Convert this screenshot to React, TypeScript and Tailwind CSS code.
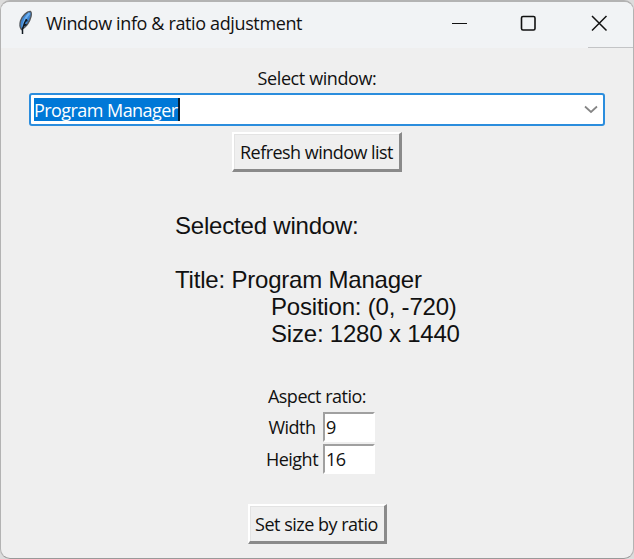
import type { ReactNode } from "react";

const ui = "font-['Open_Sans','Noto_Sans',sans-serif]";

function Feather() {
  return (
    <svg width="16" height="26" viewBox="0 0 16 26" className="ml-[16px] shrink-0">
      <path d="M13.500 1.500C10 1 5 6 3.500 11c-1 3.500-1 6 1 8.500 5-3 8-7 9.500-13 .5-2.500.3-4.500-.5-5Z" fill="#3f86d2" stroke="#55585c" strokeWidth="1.400" />
      <path d="M12.500 3C9 7 6.500 12 6 17" fill="none" stroke="#6fb0ee" strokeWidth="2" />
      <path d="M9.500 9 7.500 13 5.500 19 5.500 24M8.500 11l2-.5M6.500 15.500l3-1" fill="none" stroke="#101820" strokeWidth="1.500" />
    </svg>
  );
}

function RaisedButton({ className, children }: { className: string; children: ReactNode }) {
  return (
    <button className={`flex shrink-0 items-center justify-center border-t-2 border-l-2 border-r-[3px] border-b-[3px] border-t-white border-l-white border-r-[#8a8a8a] border-b-[#8a8a8a] bg-[#efefef] shadow-[inset_1px_1px_0_#e3e3e3] ${className}`}>
      {children}
    </button>
  );
}

function Entry({ value }: { value: string }) {
  return (
    <div className="flex h-[30px] w-[52px] items-center border-2 border-t-[#a0a0a0] border-l-[#a0a0a0] border-r-white border-b-white bg-white pl-px text-[18px] tracking-[-0.600px]">
      {value}
    </div>
  );
}

export default function App() {
  return (
    <div className="h-[559px] w-[634px] overflow-hidden bg-[#dcdcdc]">
      <div className={`flex h-[559px] w-[634px] flex-col overflow-hidden rounded-[10px] border border-t-2 border-[#b3b3b3] border-b-[#999] bg-[#efefef] text-[18px] leading-[24px] whitespace-nowrap text-[#111] ${ui}`}>
        <header className="flex h-[46px] shrink-0 bg-[#f1f3f5]">
          <div className="flex h-[42px] flex-1 items-center">
            <Feather />
            <span className="ml-[13px] text-[18px] tracking-[-0.370px]">Window info &amp; ratio adjustment</span>
          </div>
          <svg width="194" height="46" viewBox="0 0 194 46" fill="none" stroke="#111" className="shrink-0">
            <path d="M13 21.500h15" strokeWidth="1.200" />
            <rect x="82.500" y="14.500" width="13.500" height="13.500" rx="1.500" strokeWidth="1.600" />
            <path d="m153 14 14.500 14.500m0-14.500L153 28.500" strokeWidth="1.500" />
            <path d="M149 45.500h45" stroke="#c3c4c6" />
          </svg>
        </header>
        <main className="flex flex-col items-center">
          <div className="mt-[18px] h-[24px] tracking-[-0.400px]">Select window:</div>
          <div className="mt-[3px] flex h-[33px] w-[576px] items-center justify-between rounded-[3px] border-2 border-[#2b8ddd] bg-white pr-[5px] pl-[3px]">
            <span className="h-[23px] border-r-2 border-[#061c30] bg-[#0078d7] leading-[24px] tracking-[-0.560px] text-white">Program Manager</span>
            <svg width="14" height="9" viewBox="0 0 14 9" fill="none" stroke="#858585" strokeWidth="1.700">
              <path d="m1 1.500 6 5.500 6-5.500" />
            </svg>
          </div>
          <RaisedButton className="mt-[6px] h-[40px] w-[170px] tracking-[-0.530px]">Refresh window list</RaisedButton>
          <pre className="mt-[40px] w-[284px] font-['Liberation_Sans',Arial,sans-serif] text-[24px] leading-[27px] tracking-[-0.200px]">
            <div>Selected window:</div>
            <div className="mt-[27px]">Title: Program Manager</div>
            <div className="pl-[96px]">Position: (0, -720)</div>
            <div className="pl-[96px]">Size: 1280 x 1440</div>
          </pre>
          <div className="mt-[37px] h-[24px] tracking-[-0.500px]">Aspect ratio:</div>
          <div className="mt-[4px] ml-[5px] grid grid-cols-[56px_52px] items-center gap-x-[3px] gap-y-[2px]">
            <span className="text-center tracking-[-0.500px]">Width</span>
            <Entry value="9" />
            <span className="text-center tracking-[-0.500px]">Height</span>
            <Entry value="16" />
          </div>
          <RaisedButton className="mt-[30px] h-[40px] w-[139px] tracking-[-0.500px]">Set size by ratio</RaisedButton>
        </main>
      </div>
    </div>
  );
}
